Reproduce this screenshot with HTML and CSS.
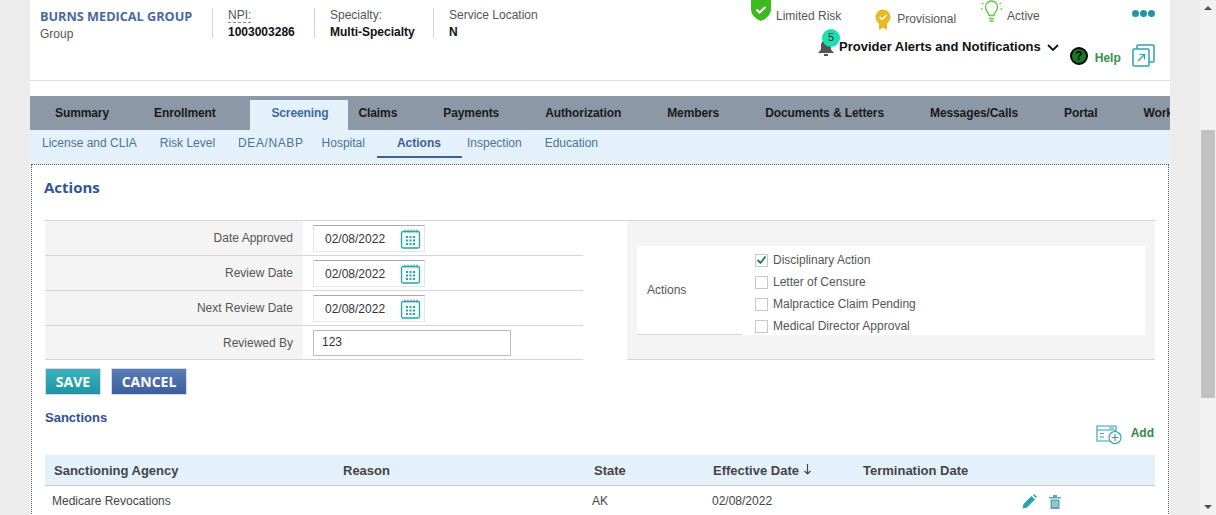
FILE: index.html
```html
<!DOCTYPE html>
<html lang="en">
<head>
    <meta charset="UTF-8">
    <meta name="viewport" content="width=device-width, initial-scale=1.0">
    <title>Provider - Actions</title>
    <link rel="stylesheet" href="styles.css">
</head>
<body>
<div class="page">
    <div class="main">
        <header class="top">
            <div class="provider">
                <div class="provider-name">BURNS MEDICAL GROUP</div>
                <div class="provider-type">Group</div>
            </div>
            <div class="fact fact-npi">
                <div><span class="dashed">NPI:</span></div>
                <div class="fact-value">1003003286</div>
            </div>
            <div class="fact fact-spec">
                <div>Specialty:</div>
                <div class="fact-value">Multi-Specialty</div>
            </div>
            <div class="fact fact-loc">
                <div>Service Location</div>
                <div class="fact-value">N</div>
            </div>
            <div class="top-right">
                <div class="status-row">
                    <div class="status status-risk">
                        <svg width="22" height="21" viewBox="0 0 22 21"><path d="M1 -3h20v12c0 6-5 10-10 12C6 19 1 15 1 9z" fill="#3cba1f"/><path d="M6.500 9.500l3 3 6-5.500" fill="none" stroke="#fff" stroke-width="2"/></svg>
                        <span>Limited Risk</span>
                    </div>
                    <div class="status status-prov">
                        <svg width="16" height="22" viewBox="0 0 16 22"><path d="M4 12v9l4-2.500 4 2.500v-9z" fill="#e8b923"/><circle cx="8" cy="8" r="7.500" fill="#e8b923"/><path d="M4.500 8l2.500 2.500 4.500-4.500" fill="none" stroke="#fff" stroke-width="1.500"/></svg>
                        <span>Provisional</span>
                    </div>
                    <div class="status status-active">
                        <svg width="21" height="22" viewBox="0 0 21 22" fill="none" stroke="#5cc74a" stroke-width="1.300"><path d="M8 15.500c0-3-3.500-4-3.500-8.500a6 6 0 0 1 12 0c0 4.500-3.500 5.500-3.500 8.500z"/><path d="M8 18.500h5M8.500 21h4" stroke-width="1.600"/><path d="M1 3l1.500 1M20 3l-1.500 1M0 9h1.500M19.500 9h1.500"/></svg>
                        <span>Active</span>
                    </div>
                    <div class="dots"><i></i><i></i><i></i></div>
                </div>
                <div class="alert-row">
                    <div class="bell">
                        <svg width="18" height="18" viewBox="0 0 18 18"><path d="M9 1c3.500 0 5 3 5 6v3.500l3 3.500H1l3-3.500V7c0-3 1.500-6 5-6z" fill="#555"/><rect x="7" y="15" width="4" height="2" fill="#555"/></svg>
                        <span class="badge">5</span>
                    </div>
                    <span class="alert-text">Provider Alerts and Notifications</span>
                    <svg class="chevron" width="12" height="7" viewBox="0 0 12 7"><path d="M1 1l5 5 5-5" fill="none" stroke="#111" stroke-width="1.800"/></svg>
                    <svg class="help-icon" width="18" height="18" viewBox="0 0 18 18"><circle cx="9" cy="9" r="8" fill="#157a22" stroke="#000" stroke-width="2"/><text x="9" y="13" text-anchor="middle" class="help-mark">?</text></svg>
                    <span class="help-text">Help</span>
                    <svg class="open-icon" width="23" height="23" viewBox="0 0 23 23" fill="none" stroke="#2aa3b3" stroke-width="1.500"><rect x="1" y="5" width="16" height="17" rx="1"/><path d="M5 5V2a1 1 0 0 1 1-1h15a1 1 0 0 1 1 1v15a1 1 0 0 1-1 1h-4"/><path d="M6 17l6-6M7.500 10.500H12.500V15.500" stroke-width="1.200"/></svg>
                </div>
            </div>
        </header>

        <nav class="tabs">
            <a>Summary</a>
            <a>Enrollment</a>
            <a class="tab-active">Screening</a>
            <a>Claims</a>
            <a>Payments</a>
            <a>Authorization</a>
            <a>Members</a>
            <a>Documents &amp; Letters</a>
            <a>Messages/Calls</a>
            <a>Portal</a>
            <a>Work</a>
        </nav>
        <nav class="subtabs">
            <a>License and CLIA</a>
            <a>Risk Level</a>
            <a class="subtab-wide">DEA/NABP</a>
            <a>Hospital</a>
            <a class="subtab-active">Actions</a>
            <a>Inspection</a>
            <a>Education</a>
        </nav>

        <section class="content">
            <h2 class="page-title">Actions</h2>
            <div class="form-area">
                <div class="form-table">
                    <div class="form-row">
                        <label>Date Approved</label>
                        <div class="form-val">
                            <div class="date-input">02/08/2022
                                <svg class="cal" width="21" height="20" viewBox="0 0 21 20"><use href="#cal-icon"/></svg>
                            </div>
                        </div>
                    </div>
                    <div class="form-row">
                        <label>Review Date</label>
                        <div class="form-val">
                            <div class="date-input">02/08/2022
                                <svg class="cal" width="21" height="20" viewBox="0 0 21 20"><use href="#cal-icon"/></svg>
                            </div>
                        </div>
                    </div>
                    <div class="form-row">
                        <label>Next Review Date</label>
                        <div class="form-val">
                            <div class="date-input">02/08/2022
                                <svg class="cal" width="21" height="20" viewBox="0 0 21 20"><use href="#cal-icon"/></svg>
                            </div>
                        </div>
                    </div>
                    <div class="form-row">
                        <label>Reviewed By</label>
                        <div class="form-val"><div class="text-input">123</div></div>
                    </div>
                </div>
                <div class="actions-panel">
                    <div class="actions-card">
                        <div class="actions-label">Actions</div>
                        <div class="checks">
                            <div class="check"><span class="box box-on"><svg width="11" height="10" viewBox="0 0 11 10"><path d="M1.500 5l3 3 5-6.500" fill="none" stroke="#1f7a5c" stroke-width="1.800"/></svg></span>Disciplinary Action</div>
                            <div class="check"><span class="box"></span>Letter of Censure</div>
                            <div class="check"><span class="box"></span>Malpractice Claim Pending</div>
                            <div class="check"><span class="box"></span>Medical Director Approval</div>
                        </div>
                    </div>
                </div>
            </div>
            <div class="buttons">
                <button class="btn btn-save">SAVE</button>
                <button class="btn btn-cancel">CANCEL</button>
            </div>
            <h3 class="section-title">Sanctions</h3>
            <div class="add-row">
                <svg width="26" height="19" viewBox="0 0 26 19" fill="none" stroke="#2aa3a8" stroke-width="1.100"><path d="M14 16H1V1h19v7"/><path d="M1 5h19M13 3h5M4 8.500h4M4 12h4"/><circle cx="19" cy="12.500" r="6" fill="#fff"/><path d="M19 9v7M15.500 12.500h7"/></svg>
                <span>Add</span>
            </div>
            <table class="grid">
                <thead>
                    <tr>
                        <th class="col-agency">Sanctioning Agency</th>
                        <th class="col-reason">Reason</th>
                        <th class="col-state">State</th>
                        <th class="col-eff">Effective Date <svg width="9" height="11" viewBox="0 0 9 11"><path d="M4.500 0v10M1.500 7l3 3 3-3" fill="none" stroke="#444" stroke-width="1.200"/></svg></th>
                        <th class="col-term">Termination Date</th>
                        <th></th>
                    </tr>
                </thead>
                <tbody>
                    <tr>
                        <td>Medicare Revocations</td>
                        <td></td>
                        <td>AK</td>
                        <td class="cell-date">02/08/2022</td>
                        <td></td>
                        <td class="row-icons">
                            <svg width="15" height="15" viewBox="0 0 15 15"><path d="M0.500 14.500l1-4.500 8-8 3.500 3.500-8 8z" fill="#2aa3a8"/><path d="M11 1l1-1 3 3-1 1z" fill="#2aa3a8"/></svg>
                            <svg class="trash" width="12" height="14" viewBox="0 0 12 14"><path d="M0 2h12v1.500H0zM4 0h4v2H4z" fill="#5aa9b5"/><path d="M1.500 4.500h9V14h-9z" fill="#5aa9b5"/><path d="M4 6v6M6 6v6M8 6v6" stroke="#fff" stroke-width=".7"/></svg>
                        </td>
                    </tr>
                </tbody>
            </table>
        </section>
    </div>
    <div class="gutter"></div>
    <div class="scrollbar">
        <span class="arrow-up"></span>
        <span class="thumb"></span>
        <span class="arrow-down"></span>
    </div>
</div>
<svg class="defs" width="0" height="0">
    <symbol id="cal-icon" viewBox="0 0 21 20">
        <rect x="1.500" y="2.500" width="18" height="16.500" rx="1.500" fill="#f3fbfb" stroke="#2aa3a8" stroke-width="1.300"/>
        <path d="M5 0.500v3M8 0.500v3M11 0.500v3M14 0.500v3M17 0.500v3" stroke="#2aa3a8"/>
        <path d="M6 7h2v2H6zM9.500 7h2v2h-2zM13 7h2v2h-2zM6 10.500h2v2H6zM9.500 10.500h2v2h-2zM13 10.500h2v2h-2zM6 14h2v2H6zM9.500 14h2v2h-2zM13 14h2v2h-2z" fill="#2aa3a8"/>
    </symbol>
</svg>
</body>
</html>
```

FILE: styles.css
```css
html, body {
    margin: 0;
    padding: 0;
    height: 515px;
    overflow: hidden;
}
body {
    font-family: "Liberation Sans", Arial, sans-serif;
    font-size: 12px;
    color: #444;
}
.page {
    display: flex;
    height: 515px;
    background-color: #ececec;
    padding-left: 30px;
    overflow: hidden;
}
.main {
    width: 1140px;
    flex: none;
    background-color: #fff;
    overflow: hidden;
}
.gutter {
    width: 30px;
    flex: none;
}
.defs {
    position: absolute;
}

/* scrollbar */
.scrollbar {
    width: 16px;
    flex: none;
    background-color: #f1f1f1;
    position: relative;
}
.thumb {
    position: absolute;
    left: 1px;
    right: 1px;
    top: 130px;
    height: 268px;
    background-color: #c1c1c1;
}
.arrow-up, .arrow-down {
    position: absolute;
    left: 4px;
    border-left: 4px solid transparent;
    border-right: 4px solid transparent;
}
.arrow-up {
    top: 6px;
    border-bottom: 4px solid #505050;
}
.arrow-down {
    bottom: 6px;
    border-top: 4px solid #505050;
}

/* header */
.top {
    display: flex;
    height: 80px;
    border-bottom: 1px solid #ddd;
    padding: 0 15px 0 10px;
    box-sizing: content-box;
    margin-bottom: 15px;
}
.provider {
    width: 172px;
    padding-top: 8px;
    flex: none;
}
.provider-name {
    font-family: "Open Sans", Arial, sans-serif;
    font-size: 12.700px;
    font-weight: 700;
    color: #4a6a9c;
    line-height: 16px;
    white-space: nowrap;
}
.provider-type {
    margin-top: 3px;
    line-height: 15px;
    color: #555;
}
.fact {
    flex: none;
    margin-top: 8px;
    height: 30px;
    border-left: 1px solid #d4d4d4;
    padding-left: 15px;
    line-height: 15px;
    color: #555;
}
.fact-npi { width: 86px; }
.fact-spec { width: 103px; }
.fact-loc { width: 120px; }
.fact-value {
    margin-top: 2px;
    font-weight: 700;
    color: #111;
}
.dashed {
    border-bottom: 1px dashed #888;
}
.top-right {
    margin-left: auto;
    width: 405px;
    flex: none;
}
.status-row {
    display: flex;
    height: 29px;
    color: #555;
}
.status {
    display: flex;
    align-items: flex-start;
}
.status span {
    line-height: 14px;
}
.status-risk span { margin: 9px 0 0 4px; }
.status-prov { margin: 9px 0 0 34px; }
.status-prov span { margin: 3px 0 0 6px; }
.status-active { margin-left: 25px; }
.status-active span { margin: 9px 0 0 5px; }
.dots {
    display: flex;
    gap: 1px;
    margin: 10px 0 0 auto;
}
.dots i {
    width: 7px;
    height: 7px;
    border-radius: 50%;
    background-color: #2196a8;
}
.alert-row {
    display: flex;
    align-items: flex-start;
    padding-left: 67px;
}
.bell {
    position: relative;
    margin-top: 10px;
    width: 22px;
    height: 18px;
    flex: none;
}
.badge {
    position: absolute;
    left: 5px;
    top: -10px;
    width: 18px;
    height: 18px;
    border-radius: 50%;
    background-color: #1ddfb0;
    color: #333;
    font-size: 11px;
    line-height: 17px;
    text-align: center;
}
.alert-text {
    font-size: 13px;
    font-weight: 700;
    color: #111;
    line-height: 16px;
    margin-top: 10px;
    white-space: nowrap;
}
.chevron {
    margin: 15px 0 0 6px;
    flex: none;
}
.help-icon {
    margin: 18px 0 0 11px;
    flex: none;
}
.help-mark {
    font-size: 12px;
    font-weight: 700;
    fill: #000;
}
.help-text {
    margin: 22px 0 0 7px;
    font-weight: 700;
    color: #3a8f4a;
    line-height: 15px;
}
.open-icon {
    margin: 15px 0 0 11px;
    flex: none;
}

/* tabs */
.tabs {
    display: flex;
    align-items: flex-end;
    height: 34px;
    padding-left: 2px;
    background-color: #8c98a6;
    white-space: nowrap;
    overflow: hidden;
}
.tabs a {
    padding: 0 23px;
    line-height: 34px;
    font-weight: 700;
    letter-spacing: -0.100px;
    color: #1a1a1a;
}
.tabs a:first-child {
    padding-right: 22px;
}
.tabs .tab-active {
    margin: 0 -12px 0 11.700px;
    padding: 0 19px 0 21px;
    line-height: 26px;
    height: 30px;
    background-color: #e4f1fb;
    color: #3d6a9c;
}
.subtabs {
    display: flex;
    height: 34px;
    padding-left: 12px;
    background-color: #e4f1fb;
    white-space: nowrap;
}
.subtabs a {
    margin-right: 23px;
    line-height: 26px;
    color: #4a7396;
}
.subtabs .subtab-wide {
    letter-spacing: 0.600px;
    margin-right: 18px;
}
.subtabs a:nth-child(4) { margin-right: 12px; }
.subtabs .subtab-active {
    height: 26px;
    padding: 0 21px 0 20px;
    margin-right: 5px;
    border-bottom: 2px solid #3d5f96;
    font-weight: 700;
    color: #3d5f96;
}

/* content */
.content {
    margin-left: 1px;
    width: 1138px;
    box-sizing: border-box;
    height: 360px;
    border: 1px dotted #555;
    padding: 0 13px;
}
.page-title {
    margin: 13px 0 0 -1px;
    font-family: "Open Sans", Arial, sans-serif;
    font-size: 15px;
    font-weight: 700;
    color: #2f5496;
    line-height: 18px;
}
.form-area {
    display: flex;
    margin-top: 24px;
    border-top: 1px solid #d5d5d5;
}
.form-table {
    width: 538px;
    flex: none;
}
.form-row {
    display: flex;
    height: 34px;
    border-bottom: 1px solid #d5d5d5;
}
.form-row:last-child {
    height: 33px;
}
.form-row label {
    width: 248px;
    padding-right: 10px;
    background-color: #f4f4f4;
    text-align: right;
    line-height: 34px;
    color: #555;
}
.form-val {
    padding: 4px 0 0 10px;
}
.date-input {
    display: flex;
    align-items: center;
    justify-content: space-between;
    width: 112px;
    height: 27px;
    box-sizing: border-box;
    padding: 0 3px 0 11px;
    border: 1px solid #e6e6e6;
    border-top-color: #aaa;
    color: #333;
}
.cal {
    flex: none;
    margin-top: 1px;
}
.text-input {
    width: 198px;
    height: 26px;
    box-sizing: border-box;
    padding-left: 8px;
    border: 1px solid #bbb;
    line-height: 22px;
    color: #333;
}
.actions-panel {
    width: 528px;
    margin-left: 44px;
    height: 139px;
    box-sizing: border-box;
    padding: 25px 10px 0;
    background-color: #f4f4f4;
    border-bottom: 1px solid #d5d5d5;
}
.actions-card {
    display: flex;
    height: 89px;
    background-color: #fff;
    overflow: hidden;
}
.actions-label {
    width: 95px;
    padding-left: 10px;
    height: 88px;
    line-height: 88px;
    border-bottom: 1px solid #d5d5d5;
    color: #555;
    flex: none;
}
.checks {
    padding: 3px 0 0 13px;
}
.check {
    display: flex;
    align-items: center;
    height: 22px;
    color: #555;
}
.box {
    display: flex;
    align-items: center;
    justify-content: center;
    width: 11px;
    height: 11px;
    margin-right: 5px;
    border: 1px solid #c8c8c8;
    flex: none;
}
.buttons {
    display: flex;
    gap: 10px;
    margin-top: 8px;
}
.btn {
    height: 27px;
    padding: 0;
    border: 1px solid #cde;
    color: #fff;
    font-family: "Open Sans", Arial, sans-serif;
    font-size: 14px;
    font-weight: 700;
}
.btn-save {
    width: 56px;
    background: linear-gradient(#3fb2bb, #1c95a5);
}
.btn-cancel {
    width: 76px;
    background: linear-gradient(#5a7db5, #3c5f9c);
}
.section-title {
    margin: 15px 0 0;
    font-size: 13px;
    font-weight: 700;
    color: #2f4e92;
    line-height: 16px;
}
.add-row {
    display: flex;
    align-items: flex-start;
    justify-content: flex-end;
    height: 22px;
    margin-top: -1px;
    padding-right: 1px;
    gap: 9px;
}
.add-row span {
    font-weight: 700;
    color: #2e8b45;
    line-height: 14px;
    margin-top: 1px;
}
.grid {
    width: 1110px;
    margin-top: 8px;
    border-collapse: collapse;
    table-layout: fixed;
}
.grid th {
    height: 30px;
    padding: 0 0 0 9px;
    background-color: #e4f1fb;
    border-bottom: 1px solid #ccc;
    text-align: left;
    font-size: 13px;
    font-weight: 700;
    color: #444;
}
.grid td {
    height: 27px;
    padding: 0 0 0 7px;
    color: #444;
}
.col-agency { width: 280px; }
.col-reason { width: 242px; }
.col-state { width: 110px; }
.col-eff { width: 141px; }
.col-term { width: 158px; }
.grid td.cell-date {
    padding-left: 8px;
}
.grid td.row-icons {
    padding: 2px 0 0 1px;
    line-height: 0;
}
.row-icons svg {
    vertical-align: middle;
    margin-right: 9px;
}
```
